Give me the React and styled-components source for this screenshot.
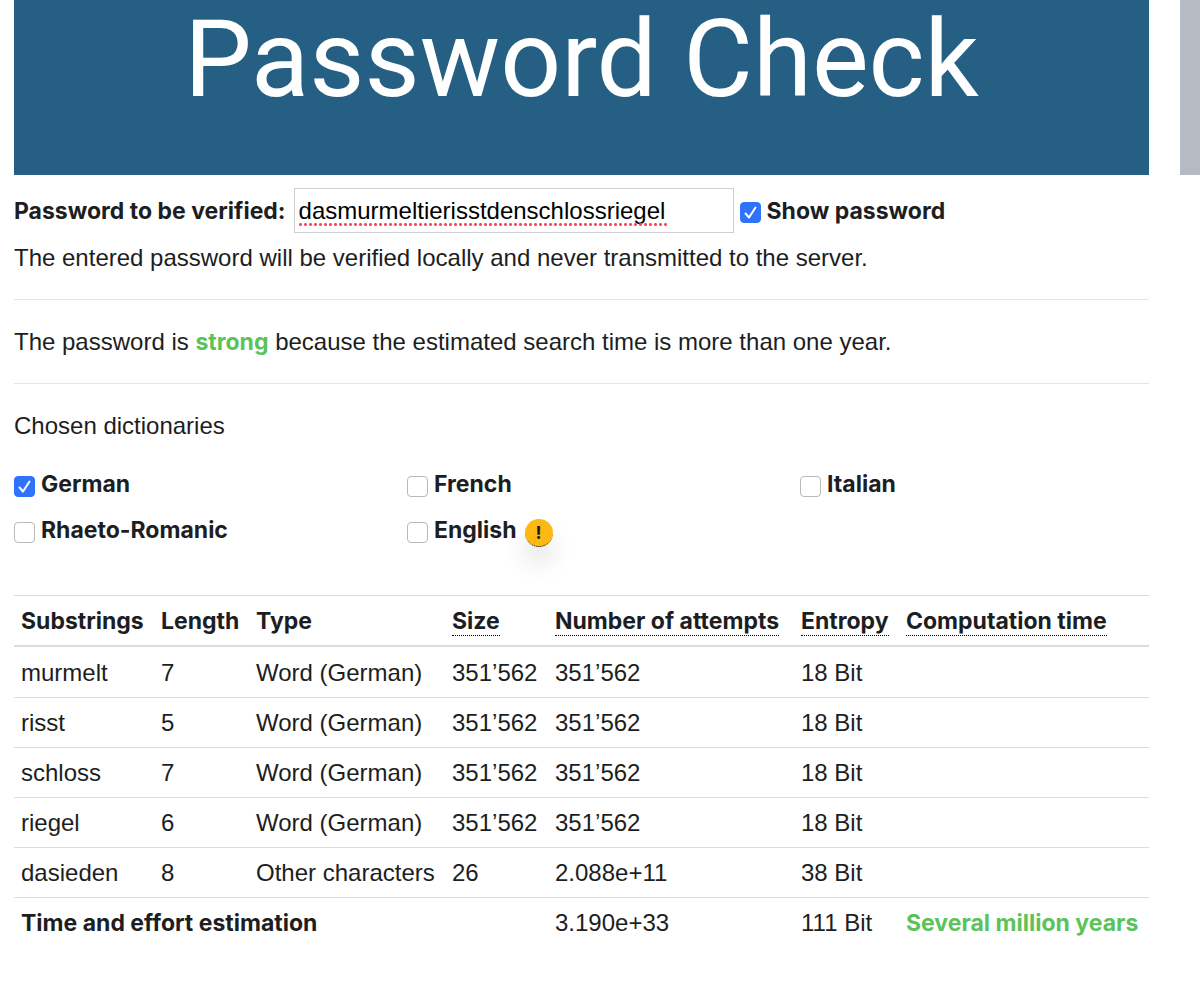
import React, { useState } from "react";
import styled, { createGlobalStyle } from "styled-components";

const GlobalStyle = createGlobalStyle`
  *, *::before, *::after {
    box-sizing: border-box;
  }
  body {
    margin: 0;
    background: white;
    color: #1c1e22;
    font-family: "Liberation Sans", Arial, sans-serif;
    font-size: 24px;
    line-height: 36px;
  }
`

const Page = styled.div`
  display: grid;
  grid-template-columns: 1fr 20px;
  column-gap: 31px;
  padding-left: 14px;
`

const Banner = styled.header`
  height: 175px;
  background: #265f84;
  color: white;
  text-align: center;
`

const Title = styled.h1`
  margin: 0;
  font-family: Roboto, sans-serif;
  font-size: 107px;
  font-weight: 400;
  line-height: 120px;
`

const SideBar = styled.aside`
  height: 175px;
  background: #b6bac2;
`

const PasswordForm = styled.form`
  display: flex;
  align-items: center;
  gap: 6px;
  padding-top: 13px;
`

const Label = styled.label`
  font-family: Inter, sans-serif;
  font-size: 23px;
  font-weight: 700;
  white-space: nowrap;
`

const Field = styled.span`
  position: relative;
  display: flex;
  margin-left: 2px;
`

const PasswordInput = styled.input`
  width: 440px;
  height: 45px;
  padding: 0 4px;
  border: 1px solid #cfcfcf;
  color: black;
  font: inherit;
`

const SpellingMark = styled.span`
  position: absolute;
  left: 4px;
  bottom: 7px;
  width: 370px;
  height: 3px;
  background: radial-gradient(circle, #f4485c 1px, transparent 2px) 0 0 / 5px 3px repeat-x;
  pointer-events: none;
`

const Check = styled.span`
  display: flex;
  align-items: center;
  gap: 6px;
`

const Box = styled.span`
  display: grid;
  padding-top: 4px;

  > * {
    grid-area: 1 / 1;
  }
`

const BoxInput = styled.input`
  appearance: none;
  width: 21px;
  height: 21px;
  margin: 0;
  border: 1px solid ${props => props.checked ? "#2f72fb" : "#b9b9b9"};
  border-radius: 4px;
  background: ${props => props.checked ? "#2f72fb" : "white"};
`

const Tick = styled.svg`
  width: 21px;
  height: 21px;
  pointer-events: none;
`

const Text = styled.p`
  margin: 0;
  padding: ${props => props.$top || 0}px 0 ${props => props.$bottom || 0}px;
`

const Line = styled.hr`
  margin: 0;
  border: 0;
  border-top: 1px solid #e4e5e6;
`

const Green = styled.strong`
  color: #5ac35a;
  font-family: Inter, sans-serif;
  font-size: 23px;
  font-weight: 700;
`

const Dictionaries = styled.div`
  display: grid;
  grid-template-columns: repeat(3, 1fr);
  grid-auto-rows: 46px;
  align-items: center;
  column-gap: 44px;
  padding: 17px 0 42px;
`

const Warning = styled.abbr`
  width: 28px;
  height: 28px;
  margin: 6px 0 0 2px;
  border-bottom: 1px dotted black;
  border-radius: 50%;
  background: #fdb813;
  box-shadow: 0 16px 24px rgba(0, 0, 0, 0.12);
  font-family: Inter, sans-serif;
  font-size: 18px;
  font-weight: 700;
  line-height: 28px;
  text-align: center;
  text-decoration: none;
`

const Table = styled.table`
  width: 100%;
  table-layout: fixed;
  border-collapse: separate;
  border-spacing: 0;
  white-space: nowrap;

  th, td {
    padding: 7px 7px 6px;
    text-align: left;
    border-top: 1px solid #dadcde;
  }
  th {
    font-family: Inter, sans-serif;
    font-size: 23px;
    font-weight: 700;
  }
  thead th {
    border-bottom: 2px solid #d8dde2;
  }
  tbody tr:first-child td {
    padding-top: 8px;
    border-top: 0;
  }
`

const Hint = styled.abbr`
  display: inline-block;
  border-bottom: 1px dotted black;
  line-height: 28px;
  text-decoration: none;
`

const widths = [140, 95, 196, 103, 246, 105]

const columns = [
  { name: "Substrings" },
  { name: "Length" },
  { name: "Type" },
  { name: "Size", hint: true },
  { name: "Number of attempts", hint: true },
  { name: "Entropy", hint: true },
  { name: "Computation time", hint: true },
]

const rows = [
  ["murmelt", "7", "Word (German)", "351’562", "351’562", "18 Bit", ""],
  ["risst", "5", "Word (German)", "351’562", "351’562", "18 Bit", ""],
  ["schloss", "7", "Word (German)", "351’562", "351’562", "18 Bit", ""],
  ["riegel", "6", "Word (German)", "351’562", "351’562", "18 Bit", ""],
  ["dasieden", "8", "Other characters", "26", "2.088e+11", "38 Bit", ""],
]

const CheckField = ({ id, label, checked, onChange, children }) => (
  <Check>
    <Box>
      <BoxInput type="checkbox" id={id} checked={checked} onChange={onChange} />
      {checked &&
        <Tick viewBox="0 0 21 21" fill="none" stroke="white" strokeWidth="2" strokeLinecap="round" strokeLinejoin="round">
          <path d="M5.5 11.5 L9 15.5 L15.5 5.5" />
        </Tick>
      }
    </Box>
    <Label htmlFor={id}>{label}</Label>
    {children}
  </Check>
)

const App = () => {
  const [password, setPassword] = useState("dasmurmeltierisstdenschlossriegel")
  const [edited, setEdited] = useState(false)
  const [show, setShow] = useState(true)
  const [chosen, setChosen] = useState({ German: true })

  const changePassword = (e) => {
    setPassword(e.target.value)
    setEdited(true)
  }

  return (
    <Page>
      <GlobalStyle />
      <main>
        <Banner>
          <Title>Password Check</Title>
        </Banner>
        <PasswordForm onSubmit={(e) => e.preventDefault()}>
          <Label htmlFor="password">Password to be verified:</Label>
          <Field>
            <PasswordInput
              id="password"
              type={show ? "text" : "password"}
              spellCheck={edited}
              value={password}
              onChange={changePassword}
            />
            {show && !edited && <SpellingMark />}
          </Field>
          <CheckField id="show" label="Show password" checked={show} onChange={() => setShow(!show)} />
        </PasswordForm>
        <Text $top={7} $bottom={23}>The entered password will be verified locally and never transmitted to the server.</Text>
        <Line />
        <Text $top={24} $bottom={23}>
          The password is <Green>strong</Green> because the estimated search time is more than one year.
        </Text>
        <Line />
        <Text $top={24}>Chosen dictionaries</Text>
        <Dictionaries>
          {["German", "French", "Italian", "Rhaeto-Romanic", "English"].map(name => (
            <CheckField
              key={name}
              id={name}
              label={name}
              checked={!!chosen[name]}
              onChange={() => setChosen({ ...chosen, [name]: !chosen[name] })}
            >
              {name === "English" && <Warning>!</Warning>}
            </CheckField>
          ))}
        </Dictionaries>
        <Table>
          <colgroup>
            {widths.map((w, i) => <col key={i} width={w} />)}
            <col />
          </colgroup>
          <thead>
            <tr>
              {columns.map(c => (
                <th key={c.name} scope="col">{c.hint ? <Hint>{c.name}</Hint> : c.name}</th>
              ))}
            </tr>
          </thead>
          <tbody>
            {rows.map(row => (
              <tr key={row[0]}>
                {row.map((cell, i) => <td key={i}>{cell}</td>)}
              </tr>
            ))}
            <tr>
              <th colSpan={4} scope="row">Time and effort estimation</th>
              <td>3.190e+33</td>
              <td>111 Bit</td>
              <td><Green>Several million years</Green></td>
            </tr>
          </tbody>
        </Table>
      </main>
      <SideBar />
    </Page>
  )
}

export default App;
